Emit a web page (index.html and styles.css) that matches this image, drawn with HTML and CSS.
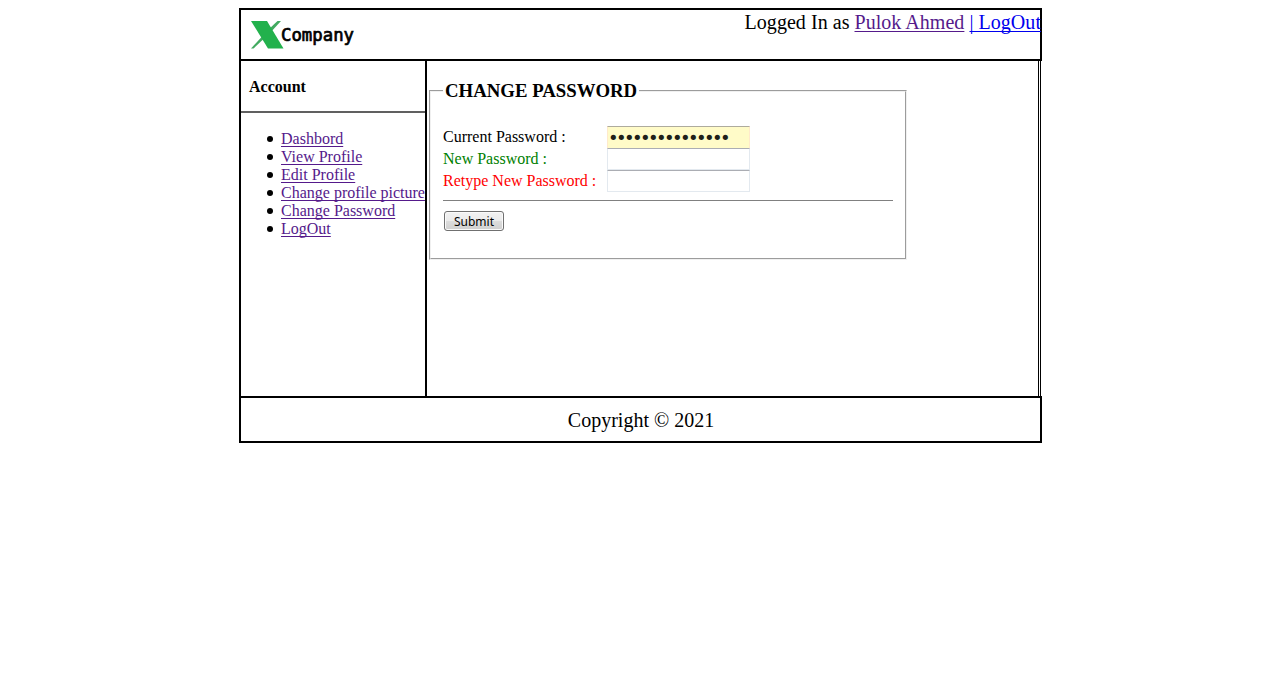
FILE: index.html
```html
<!DOCTYPE html>
<html lang="en">
<head>
<meta charset="utf-8">
<title>Change Password</title>
<link rel="stylesheet" href="styles.css">
</head>
<body>
<div class="page">
  <header class="header">
    <svg class="logo" width="108" height="36" viewBox="0 0 108 36" role="img" aria-label="XCompany">
      <path d="M1 30.500L18 12L27.500 3H31L20 15L3.500 30.500Z" fill="#42aa60"/>
      <path d="M1 3H17L33.500 30.500H18Z" fill="#22b14c"/>
      <text class="logo-text" x="31" y="22.500" textLength="73" lengthAdjust="spacingAndGlyphs">Company</text>
    </svg>
    <div class="session">Logged In as <a class="visited" href="#">Pulok Ahmed</a> <a class="logout" href="#">| LogOut</a></div>
  </header>
  <div class="middle">
    <nav class="sidebar">
      <h2 class="account">Account</h2>
      <ul class="menu">
        <li><a class="visited" href="#">Dashbord</a></li>
        <li><a class="visited" href="#">View Profile</a></li>
        <li><a class="visited" href="#">Edit Profile</a></li>
        <li><a class="visited" href="#">Change profile picture</a></li>
        <li><a class="visited" href="#">Change Password</a></li>
        <li><a class="visited" href="#">LogOut</a></li>
      </ul>
    </nav>
    <main class="content">
      <fieldset class="box">
        <legend class="title">CHANGE PASSWORD</legend>
        <form class="form">
          <label class="row"><span>Current Password :</span><input class="field filled" type="password" value="123456789012345"></label>
          <label class="row new"><span>New Password :</span><input class="field" type="password"></label>
          <label class="row retype"><span>Retype New Password :</span><input class="field" type="password"></label>
          <hr class="rule">
          <button class="submit" type="button">Submit</button>
        </form>
      </fieldset>
    </main>
  </div>
  <footer class="footer">Copyright © 2021</footer>
</div>
</body>
</html>
```
FILE: styles.css
```css
* { box-sizing: border-box; }
body { margin: 0; background: #fff; color: #000; font-family: "Liberation Serif", "Times New Roman", serif; font-size: 16px; line-height: 18px; }
a { text-decoration-thickness: 1px; text-underline-offset: 2px; text-decoration-skip-ink: none; }
.page { width: 803px; margin: 8px 0 0 239px; }
.header { height: 53px; border: 2px solid #000; display: flex; justify-content: space-between; }
.logo { margin: 8px 0 0 9px; flex: none; }
.logo-text { font: 17px "DejaVu Sans Mono", monospace; fill: #000; stroke: #000; stroke-width: 0.7px; }
.session { font-size: 20px; line-height: 23px; margin-top: 1px; margin-right: -1px; letter-spacing: 0.04px; white-space: nowrap; }
.visited { color: #551a8b; }
.logout { color: #00e; }
.middle { width: 802px; height: 335px; display: flex; border-left: 2px solid #000; border-right: 3px double #000; }
.sidebar { width: 186px; flex: none; border-right: 2px solid #000; }
.account { margin: 0; height: 52px; padding: 17px 8px 0; border-bottom: 2px solid #606060; font-size: 16px; line-height: 18px; }
.menu { margin: 17px 0 0; padding: 0 0 0 26px; white-space: nowrap; list-style: none; }
.menu li { display: flex; align-items: center; gap: 8px; }
.menu li::before { content: ""; width: 6px; height: 6px; border-radius: 50%; background: #000; }
.content { flex: 1; padding: 19px 0 0 2px; }
.box { width: 478px; height: 180px; margin: 0; padding: 0 12px; border: 2px groove #f0f0f0; }
.title { padding: 0 2px; font-size: 18.8px; line-height: 22px; font-weight: bold; }
.form { padding-top: 24px; }
.row { display: flex; height: 22px; line-height: 22px; }
.row span { width: 164px; }
.new { color: #008000; }
.retype { color: #f00; }
.field { width: 143px; height: 22px; margin: 0; padding: 1px 2px; border: 1px solid #e3e9ef; border-top-color: #abadb3; background: #fff; font: 13px "DejaVu Sans", sans-serif; }
.filled { height: 23px; padding-left: 0; background: #fffbc8; border-color: #ffeacb; border-top-color: #aeab9d; color: #201f18; font-size: 18px; letter-spacing: -2.62px; }
.rule { margin: 8px 0 10px; height: 1px; border: 0; background: #808080; width: 450px; }
.submit { display: block; width: 60px; height: 20px; margin-left: 1px; padding: 2px 0 0; border: 1px solid #707070; border-radius: 3px; background: linear-gradient(#f2f2f2 0%, #ebebeb 49%, #ddd 50%, #cfcfcf 100%); box-shadow: inset 0 0 0 1px #fafafa; color: #000; font: 12px/16px "Noto Sans", sans-serif; }
.footer { height: 47px; border: 2px solid #000; text-align: center; font-size: 20px; line-height: 23px; padding: 11px 0 0 1px; }
```
